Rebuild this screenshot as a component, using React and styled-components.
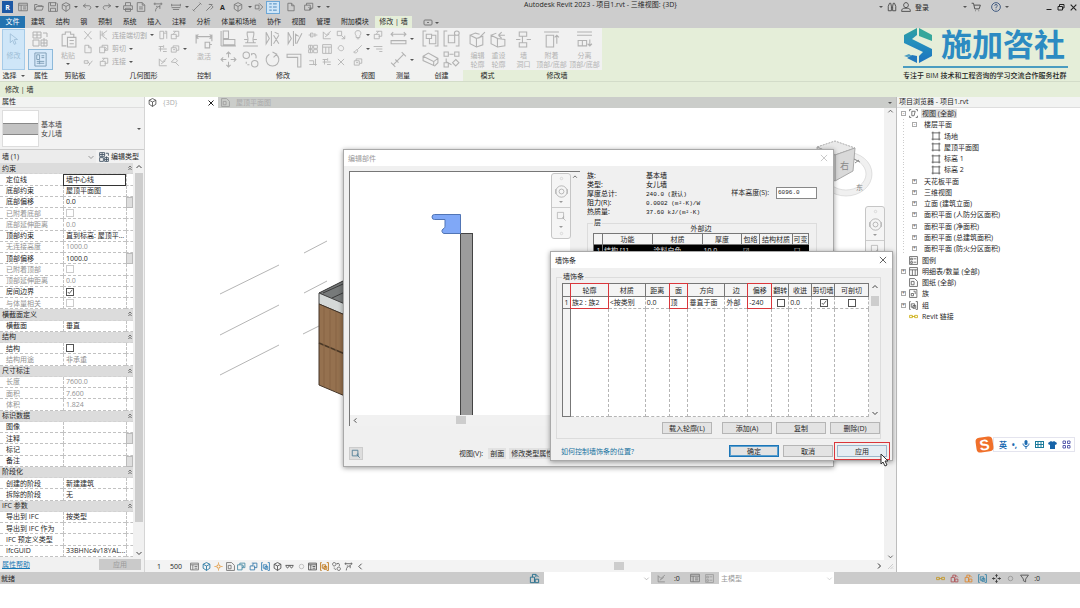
import React from "react";
import styled, { createGlobalStyle, css } from "styled-components";

const GlobalStyle = createGlobalStyle`
  * { box-sizing: border-box; }
  html, body { margin: 0; background: #fff; }
  body, button, input, select, table {
    font-family: "Open Sans", "Noto Sans CJK SC", sans-serif;
    font-size: 7px;
    line-height: 9px;
    color: #262626;
  }
  button, input, select { margin: 0; padding: 0; border: 0; background: none; border-radius: 0; }
  body { overflow-x: hidden; }
`;

/* ---------- icons ---------- */
const ICONS = {
  window: "M1 2h14v12H1zM1 5h14M5 5v9M8 8h5M8 11h5",
  open: "M1 13V4h4l2 2h6v2M1 13l3-6h11l-2 6z",
  save: "M1 1h12l2 2v12H1zM4 1v5h8V1M4 15v-5h8v5",
  cube: "M8 1l6 3v7l-6 4-6-4V4zM2 4l6 3 6-3M8 7v8",
  undo: "M6 3L2 6l4 3M2 6h9c4 0 4 6 0 6",
  redo: "M10 3l4 3-4 3M14 6H5c-4 0-4 6 0 6",
  print: "M4 6V1h8v5M1 6h14v6H1zM4 10h8v5H4z",
  doc: "M2 1h8l4 4v10H2zM10 1v4h4M5 8h6M5 11h6",
  measure: "M1 3h14M3 1v4M13 1v4M5 7h2M4 15c0-5 3-8 7-8M11 5v6",
  dim: "M1 9h14M1 5h14M1 3v4M15 3v4M3 12h10",
  line: "M2 14L14 2M1 12l3 3M12 1l3 3",
  tag: "M2 14L9 7M8 3l5 5-4 4M6 4h6",
  section: "M8 2l6 6-6 6M2 5h6v6H2z",
  list: "M2 3h4M8 3h6M2 8h4M8 8h6M2 13h4M8 13h6",
  switchWin: "M1 5h9v8H1zM4 5V2h10v8h-4M7 8l4 4M11 9v3H8",
  binoc: "M2 14V7l2-5h2l1 5v7zM9 14V7l1-5h2l2 5v7zM7 8h2",
  user: "M8 1c5 0 5 8 0 8s-5-8 0-8M1 15c0-5 3-5 7-5s7 0 7 5z",
  cart: "M1 2h3l2 9h7l2-6H5M7 14h1M12 14h1",
  help: "M8 1a7 7 0 100 14A7 7 0 008 1M6 6c0-3 4-3 4 0 0 2-2 1-2 4M8 12v1",
  arrow: "M4 1v11l3-3 2 5 2-1-2-5h4z",
  types: "M1 1h8v6H1zM1 9h6v6H1zM9 9h6v6H9zM5 1v6M12 7v8M1 4h8M9 12h6M11 2h4v4",
  props: "M2 1h12v14H2zM4 3h3v5H4zM9 4h3M9 6h3M4 10h8M4 12h8M7 9v4",
  paste: "M2 3h3V1h5v2h3v3M2 3v11h4M7 6h8v9H7zM9 9h4M9 12h4",
  cut: "M2 2l11 12M13 2L3 14M2 14h2M12 14h2",
  copy: "M3 2h6l4 4v8H3zM9 2v4h4",
  match: "M2 6h6v4H2zM8 8l3 3 4-5M9 14l2-3",
  cope: "M2 1v14M5 2v5l8-6M5 9l8 6M5 8h4M2 8h3",
  cutgeo: "M1 5h8v9H1zM5 5V2h9v8H9M9 5l3 2-3 4",
  join: "M5 2h9v8h-5M2 7h8v7H2zM5 7l4-5",
  wallA: "M3 2h6v12H3zM9 5h5v9M11 2h3v3",
  beam: "M1 4h7M1 8h13M4 4v8M8 12h6M9 2v4",
  split: "M2 14V3l5 5 7-6M2 14h12M5 11l7-5",
  hammer: "M2 8l6-6 4 4-3 3zM8 8l6 6",
  activate: "M1 3v8M15 3v6M1 5h14M3 3L1 5l2 2M13 3l2 2-2 2M9 10h4v5H9zM13 12h2",
  align: "M1 1v14M1 15h14M3 9h11v5H3zM3 1h5v7H3z",
  offset: "M1 15h14M3 12h10M5 12c2-5-1-6 0-10h6c1 4-2 5 0 10M2 9h3M11 9h3",
  mirror: "M7 1v14M2 2v11l3-5zM9 5l5 8M14 5l-5 8M10 2l4 2",
  mirrorLine: "M7 1v14M2 2v11l3-5zM9 13V4l3 2M10 13l5-10",
  move: "M8 1v5M8 10v5M1 8h5M10 8h5M6 3l2-2 2 2M6 13l2 2 2-2M3 6L1 8l2 2M13 6l2 2-2 2",
  copyObj: "M4 1c4 0 4 6 0 6s-4-6 0-6M12 9c4 0 4 6 0 6s-4-6 0-6M9 3c3-2 5 1 4 4M9 2v2M4 10v2M7 13h-2",
  rotate: "M11 3a6 6 0 11-6 0M8 1l4 2-3 3",
  trim: "M1 3h13v12h-3V6H1z",
  pins: "M1 8h5M10 8h5M4 5h4v6H4zM11 5v6",
  array: "M1 2h6v5H1zM9 2h6v5H9zM1 9h6v5H1zM9 9h6v5H9zM4 2v12",
  extend: "M2 12h12M2 6h7v6M12 3v11",
  x: "M3 3l10 10M13 3L3 13",
  scale: "M2 2h7v7H2zM9 9l5 5M14 9v5H9",
  unpin: "M4 5c2-4 7-3 8 1s-3 6-6 4-3-3-2-5",
  bulb: "M8 1c6 0 5 6 3 8v3H5V9C3 7 2 1 8 1M6 14h4",
  hide: "M2 6h8v7H2zM5 6V3h9v7h-4M5 9h3",
  brush: "M14 2L7 9M7 9c-3-1-2 4-6 4 3 3 8 0 6-4",
  lines: "M1 4h14M5 8h10M10 12h5",
  measureWall: "M1 4h14M3 2L1 4l2 2M13 2l2 2-2 2M1 10h14v3H1z",
  measureDiag: "M3 13L13 3M1 11l4 4M11 1l4 4M5 8l3 3",
  group: "M4 1H1v14h3M12 1h3v14h-3M4 4h5v4H4zM7 8v5h6V5H9",
  groupB: "M4 1H1v14h3M12 15h3V5M5 5h6v7H5zM13 1c3 0 3 4 0 4s-3-4 0-4",
  assembly: "M1 5l5-3 9 5v4l-3 3-11-5zM1 5l10 5v4M11 10l4-3",
  flow: "M1 1h4v4H1zM11 1h4v4h-4zM6 3h4M3 7v3l5 3M1 11h4v4H1zM12 8l3 3-3 3-3-3z",
  editProf: "M1 4l6 3v8l-6-3zM7 7l6-2v8l-6 2M1 4l5-2 4 1M9 7l6-6",
  resetProf: "M1 4l6 3v8l-6-3zM7 7l7 1v6l-7 1M1 4l5-2M8 4h6M8 4l3-3M8 4l3 3",
  opening: "M4 1h7v4H4zM4 11h7v4H4zM7 5v6M1 8h4M11 8h4",
  attach: "M1 1h14M3 4h7v11H3zM13 4v8M11 6l2-2 2 2",
  detach: "M1 1h14M1 4h14M2 9h8v5H2zM6 9v5M13 8v6M11 12l2 2 2-2",
  bbox: "M4 1H1v3M12 1h3v3M15 12v3h-3M4 15H1v-3M5 4h6l-2 8H5z",
  sheet: "M3 3h10v10H3zM1 3h2M3 1v2M13 1v2M13 3h2M1 13h2M3 13v2M13 13h2M13 13v2",
  legend: "M1 1h14v14H1zM3 4h3v3H3zM8 5h5M3 10h3v3H3zM8 11h5",
  schedule: "M1 1h14v14H1zM1 5h14M6 5v10M11 5v10",
  sheets: "M1 1h9l5 5v9H1zM4 6h5v6H4z",
  family: "M1 1h13v14H1zM4 8h4v4H4zM8 4h3v5",
  groups: "M3 1H1v14h2M12 1h3v14h-3M4 5h6v6H4zM7 8h5v5H7z",
  link: "M1 6h5v4H1zM10 6h5v4h-5zM5 8h6",
  wheel: "M8 1a7 7 0 100 14A7 7 0 008 1M8 5a3 3 0 100 6 3 3 0 000-6M1 5v6M15 5v6",
  zoomBox: "M2 2h9v9H2zM9 9l5 5M11 7v4",
  glasses: "M1 6h14M2 6c0 6 5 6 5 0M9 6c0 6 5 6 5 0",
  sun: "M8 5a3 3 0 100 6 3 3 0 000-6M8 1v2M8 13v2M1 8h2M13 8h2",
  filter: "M1 2h14L10 9v5l-4-2V9z",
  worker: "M2 6h6v8H2zM5 6V2h5v4M9 9h5v5H9zM10 2l4 4",
  dot: "M8 4a4 4 0 100 8 4 4 0 000-8",
  up: "M3 10l5-5 5 5",
  down: "M3 6l5 5 5-5",
  left: "M10 3L5 8l5 5",
  right: "M6 3l5 5-5 5",
  min: "M3 13h10",
  restore: "M2 7h9v7H2zM5 7V3h9v7h-3",
  grip: "M14 4L4 14M14 9l-5 5M14 13l-1 1",
  dbl: "M4 7l4-4 4 4M4 13l4-4 4 4",
};

function Icon({ name, size = 10, color = "#777", width = 1.4, fill = "none" }) {
  return (
    <svg width={size} height={size} viewBox="0 0 16 16" fill={fill} stroke={color} strokeWidth={width} aria-hidden="true">
      <path d={ICONS[name]} />
    </svg>
  );
}

const Caret = styled.i`
  flex: none;
  width: 0;
  height: 0;
  border: 2px solid transparent;
  border-top-color: ${(p) => p.$color || "#555"};
  border-bottom-width: 0;
`;

/* ---------- page ---------- */
const Page = styled.div`
  display: flex;
  flex-direction: column;
  min-height: 100vh;
  padding-bottom: 24px;
`;

const Header = styled.header`
  height: 28px;
  background: #cdcdcd;
`;

const TitleRow = styled.div`
  display: grid;
  grid-template-columns: 13fr auto 10fr;
  align-items: start;
  height: 16px;
`;

const QuickBar = styled.div`
  display: flex;
  align-items: center;
  height: 14px;
`;

const AppBadge = styled.button`
  width: 11px;
  height: 12px;
  margin: 0 2px;
  background: #1c58a5;
  color: #fff;
  font-weight: 700;
`;

const QuickButton = styled.button`
  display: inline-flex;
  flex: none;
  align-items: center;
  justify-content: center;
  width: ${(p) => p.$w}px;
  height: 13px;
  ${(p) => p.$on && css`background: #cfe6f8; outline: 1px solid #6da7d6; outline-offset: -1px;`}
`;

const WindowTitle = styled.h1`
  margin: 0;
  font-size: 7px;
  font-weight: 400;
  line-height: 10px;
  white-space: nowrap;
`;

const TitleTools = styled.div`
  display: flex;
  align-items: center;
  justify-content: flex-end;
  gap: 4px;
  height: 14px;
  padding-right: 2px;
`;

const Spacer = styled.span`
  flex: none;
  width: ${(p) => p.$w}px;
`;

const TabRow = styled.nav`
  display: flex;
  align-items: stretch;
  height: 12px;
`;

const FileTab = styled.button`
  width: 25px;
  background: #2273b0;
  color: #fff;
  line-height: 12px;
`;

const TabStrip = styled.div`
  display: flex;
  justify-content: space-between;
  width: 338px;
  margin: 0 6px;
`;

const Tab = styled.button`
  line-height: 12px;
  white-space: nowrap;
`;

const ActiveTab = styled(Tab)`
  width: 37px;
  background: #e5eed9;
`;

/* ---------- ribbon ---------- */
const Ribbon = styled.section`
  display: flex;
  height: 54px;
  background: #e5eed9;
  border-bottom: 1px solid #d3dcc9;
`;

const Panel = styled.div`
  display: flex;
  flex: none;
  flex-direction: column;
  width: ${(p) => p.$w}px;
  background: ${(p) => (p.$context ? "transparent" : "#f1f2f0")};
`;

const Tools = styled.div`
  display: flex;
  height: 42px;
  padding-left: ${(p) => p.$pad || 0}px;
  background: #f1f1f1;
`;

const PanelLabel = styled.div`
  display: flex;
  flex: 1;
  align-items: center;
  justify-content: center;
  gap: 4px;
`;

const Column = styled.div`
  display: grid;
  flex: none;
  grid-template-rows: ${(p) => (p.$rows === 2 ? "21px 21px" : "14px 13px 13px")};
  width: ${(p) => p.$w}px;
`;

const Tool = styled.button`
  display: flex;
  align-items: center;
  justify-content: ${(p) => (p.$start ? "flex-start" : "center")};
  gap: 3px;
  color: #ababab;
  white-space: nowrap;
  ${(p) => p.$on && css`margin: 1px 1px 1px 2px; background: #d8eafa; outline: 1px solid #8db9da;`}
`;

const TallTool = styled.button`
  display: flex;
  flex: none;
  flex-direction: column;
  align-items: center;
  width: ${(p) => p.$w}px;
  height: 41px;
  margin-top: 1px;
  padding-top: ${(p) => (p.$on ? 4 : 2)}px;
  gap: 3px;
  color: #b4b4b4;
  white-space: nowrap;
  ${(p) => p.$on && css`background: #cfe6f8; outline: 1px solid #a6cbe8; outline-offset: -1px; color: #9dbdd6; gap: 5px;`}
`;

const Brand = styled.div`
  display: grid;
  grid-template-columns: 30px 1fr;
  column-gap: 8px;
  align-content: start;
  align-items: start;
  width: 165px;
  margin-left: auto;
  margin-right: 12px;
`;

const BrandName = styled.strong`
  font-size: 31px;
  line-height: 32px;
  color: #2c8bc2;
  white-space: nowrap;
`;

const BrandTag = styled.div`
  grid-column: 1 / -1;
  margin-top: 2px;
  border-top: 2px solid #4a9cc0;
  padding-top: 3px;
  font-weight: 500;
  color: #222;
  white-space: nowrap;
`;

const OptionsBar = styled.div`
  height: 15px;
  padding-left: 5px;
  background: #e5eed9;
  line-height: 15px;
`;

/* ---------- workspace ---------- */
const Workspace = styled.main`
  position: relative;
  display: grid;
  flex: 1;
  grid-template-columns: 145px minmax(0, 1fr) 184px;
`;

const Side = styled.aside`
  display: flex;
  flex-direction: column;
  background: ${(p) => p.$bg};
  ${(p) => (p.$left ? css`border-right: 1px solid #d5d5d5;` : css`border-left: 1px solid #bdbdbd;`)}
`;

const SideTitle = styled.h2`
  margin: 0;
  padding-left: 2px;
  height: 11px;
  background: #f2f3f2;
  border-bottom: 1px solid #dedede;
  font-size: 7px;
  font-weight: 400;
  line-height: 10px;
`;

const TypePicker = styled.button`
  display: flex;
  align-items: center;
  height: 42px;
  padding: 0 3px 0 2px;
  background: #f2f2f2;
  border-bottom: 1px solid #ccc;
  text-align: left;
`;

const TypePreview = styled.span`
  width: 37px;
  height: 37px;
  margin-right: 2px;
  border: 1px solid #ddd;
  background: linear-gradient(#fff 12px, #888 12px, #888 13px, #c3c3c3 13px, #c3c3c3 23px, #888 23px, #888 24px, #fff 24px);
`;

const TypeName = styled.span`
  flex: 1;
  color: #444;
`;

const InstanceRow = styled.div`
  display: flex;
  height: 13px;
  background: #f2f2f2;
`;

const SelectBox = styled.label`
  position: relative;
  display: block;
  align-self: stretch;
  width: ${(p) => p.$w}px;
  background: ${(p) => p.$bg || "#fff"};
  select {
    display: block;
    appearance: none;
    width: 100%;
    height: 100%;
    padding-left: 2px;
    color: ${(p) => p.$color || "#262626"};
  }
  svg { position: absolute; right: 1px; top: 3px; pointer-events: none; }
`;

const EditType = styled.button`
  display: flex;
  flex: 1;
  align-items: center;
  gap: 2px;
  padding-left: 3px;
  white-space: nowrap;
`;

const PropBody = styled.div`
  display: flex;
  height: 394px;
`;

const PropTable = styled.table`
  flex: none;
  width: 133px;
  height: 394px;
  table-layout: fixed;
  border-collapse: separate;
  border-spacing: 0;
  background: #fff;
  td, th {
    padding: 0 0 0 6px;
    border-bottom: 1px dashed #c2c2c2;
    font-weight: 400;
    text-align: left;
    white-space: nowrap;
    overflow: hidden;
    line-height: 9px;
  }
  td { padding-left: 2px; border-left: 1px dashed #c2c2c2; }
`;

const GroupRow = styled.tr`
  && th { background: #dcdcdc; border-bottom-color: #d2d2d2; padding-left: 2px; }
  && th:last-child { padding: 0; text-align: center; }
  svg { display: block; margin: 0 auto; }
`;

const PropRow = styled.tr`
  color: ${(p) => (p.$muted ? "#929292" : "#262626")};
  && td:nth-child(2) { ${(p) => p.$focus && css`outline: 1px solid #333; outline-offset: -1px;`} }
  && td:last-child { padding: 0; ${(p) => p.$button && css`background: #dedede; border: 1px solid #bbb;`} }
`;

const Tick = styled.input.attrs({ type: "checkbox" })`
  appearance: none;
  display: block;
  width: 8px;
  height: 8px;
  margin: ${(p) => (p.$center ? "0 auto" : "0")};
  border: 1px solid ${(p) => (p.$muted ? "#ccc" : "#555")};
  background: #fff;
  &:checked {
    background: #fff url("data:image/svg+xml,%3Csvg xmlns='http://www.w3.org/2000/svg' viewBox='0 0 8 8'%3E%3Cpath d='M1 4l2 2 4-5' fill='none' stroke='%23333'/%3E%3C/svg%3E") center / 6px 6px no-repeat;
  }
`;

const VScroll = styled.div`
  display: flex;
  flex-direction: column;
  align-items: center;
  justify-content: space-between;
  width: ${(p) => p.$w || 10}px;
  background: #f1f1f1;
`;

const VThumb = styled.span`
  flex: ${(p) => (p.$h ? "none" : 1)};
  width: 8px;
  height: ${(p) => (p.$h ? p.$h + "px" : "auto")};
  margin: 2px 0 ${(p) => p.$after || 0}px;
  background: #cdcdcd;
`;

const PropFooter = styled.div`
  display: flex;
  flex: 1;
  align-items: center;
  justify-content: space-between;
  padding: 0 3px 0 2px;
  background: #f1f1f1;
  a { color: #1878b5; }
`;

const FlatButton = styled.button`
  width: 42px;
  height: 11px;
  background: #cacaca;
  color: #999;
`;

/* ---------- view area ---------- */
const ViewArea = styled.section`
  display: flex;
  flex-direction: column;
`;

const DocTabs = styled.div`
  display: flex;
  align-items: stretch;
  height: 11px;
  background: #cbcdca;
`;

const DocTab = styled.button`
  display: flex;
  align-items: center;
  gap: 6px;
  width: 73px;
  padding: 0 3px;
  background: ${(p) => (p.$on ? "#fff" : "transparent")};
  color: #aaa;
  span { flex: 1; text-align: left; }
`;

const Canvas = styled.div`
  position: relative;
  display: flex;
  flex: 1;
  justify-content: flex-end;
  background: #fff;
`;

const Scene = styled.svg`
  position: absolute;
  left: 0;
  top: 0;
`;

const CubeArt = styled.svg`
  position: absolute;
  right: 18px;
  top: 27px;
`;

const NavBar = styled.div`
  position: absolute;
  right: ${(p) => p.$right}px;
  top: ${(p) => p.$top}px;
  display: flex;
  flex-direction: column;
  align-items: center;
  justify-content: space-between;
  width: 20px;
  height: 66px;
  padding: 2px 0;
  border: 1px solid #c6c6c6;
  border-radius: 3px;
  background: #f5f5f5;
  hr { width: 100%; margin: 0; border: 0; border-top: 1px solid #ccc; }
`;

const ViewBar = styled.div`
  display: flex;
  align-items: center;
  height: 12px;
  padding: 0 2px 0 12px;
  background: #f3f3f3;
`;

const ViewIcons = styled.div`
  display: flex;
  justify-content: space-between;
  width: 175px;
  margin-left: 8px;
`;

const HTrack = styled.div`
  display: flex;
  flex: 1;
  align-items: center;
  justify-content: flex-end;
  gap: 3px;
`;

const HThumb = styled.span`
  width: 10px;
  height: 8px;
  background: #cdcdcd;
  margin-right: ${(p) => p.$after}px;
`;

/* ---------- dialogs ---------- */
const Dialog = styled.section`
  position: absolute;
  left: ${(p) => p.$x}px;
  top: ${(p) => p.$y}px;
  display: flex;
  flex-direction: column;
  width: ${(p) => p.$w}px;
  min-height: ${(p) => p.$h}px;
  border: 1px solid #a9a9a9;
  background: #f0f0f0;
  box-shadow: 0 1px 5px rgba(0, 0, 0, 0.4);
`;

const DialogTitle = styled.header`
  display: flex;
  align-items: center;
  justify-content: space-between;
  height: 16px;
  padding: 0 4px;
  background: #fff;
  color: ${(p) => (p.$muted ? "#999" : "#222")};
  button { display: flex; }
`;

const AssemblyBody = styled.div`
  display: flex;
  padding: 5px 17px 0 5px;
`;

const Preview = styled.div`
  position: relative;
  flex: none;
  width: 231px;
  height: 255px;
  border: solid #777;
  border-width: 1px 0 0 1px;
  background: #f1f1f1;
  > svg { display: block; }
`;

const PreviewScroll = styled.div`
  display: flex;
  align-items: center;
  height: 10px;
  padding-left: 2px;
  gap: 97px;
`;

const PreviewUp = styled.span`
  position: absolute;
  right: 2px;
  top: 2px;
  display: flex;
`;

const AssemblyInfo = styled.div`
  flex: 1;
  margin-left: 7px;
`;

const InfoTop = styled.div`
  display: flex;
  justify-content: space-between;
  height: 48px;
`;

const Facts = styled.dl`
  display: grid;
  grid-template-columns: 59px auto;
  grid-auto-rows: 9px;
  height: 45px;
  margin: 0;
  color: #111;
  white-space: nowrap;
  dd { margin: 0; }
`;

const Mono = styled.span`
  font-family: "Liberation Mono", "Noto Sans CJK SC", monospace;
  font-size: 6px;
`;

const Field = styled.label`
  display: flex;
  align-items: center;
  gap: 7px;
  height: 11px;
  margin-top: 16px;
  white-space: nowrap;
  input {
    width: 41px;
    height: 12px;
    padding-left: 1px;
    border: 1px solid #888;
    background: #fff;
    font-family: "Liberation Mono", monospace;
    font-size: 6px;
  }
`;

const Fieldset = styled.fieldset`
  min-width: 0;
  margin: ${(p) => p.$margin || 0};
  padding: ${(p) => p.$padding || 0};
  border: 1px solid #dcdcdc;
  legend { padding: 0 1px; line-height: 8px; }
`;

const Edge = styled.div`
  margin-top: -2px;
  text-align: center;
  line-height: 8px;
`;

const Grid = styled.table`
  width: 100%;
  table-layout: fixed;
  border-collapse: collapse;
  background: #fff;
  th, td { padding: 0; overflow: hidden; white-space: nowrap; }
  th { border: 1px solid #777; font-weight: 400; text-align: center; background: #f4f4f4; }
`;

const LayerGrid = styled(Grid)`
  thead th { height: 11px; }
  tbody td, tbody th { height: 12px; background: #000; color: #eee; padding-left: 1px; }
`;

const SweepGrid = styled(Grid)`
  flex: 1;
  width: auto;
  thead th { height: 13px; }
  td { border-right: 1px dashed #b5b5b5; border-bottom: 1px dashed #b5b5b5; padding-left: 1px; }
  tbody tr:first-child > * { height: 12px; }
  tbody tr:last-child > * { height: 108px; }
  && thead th.marked { border-left: 1px double #d9363b; border-right: 1px double #d9363b; border-top: 1px double #d9363b; }
  && tbody td.marked { border-left: 1px double #d9363b; border-right: 1px double #d9363b; border-bottom: 1px double #d9363b; }
  && thead th:has(+ .marked), && tbody td:has(+ .marked) { border-right: 1px double #d9363b; }
`;

const SweepArea = styled.div`
  display: flex;
`;

const ButtonRow = styled.div`
  display: flex;
  align-items: center;
  justify-content: flex-end;
  gap: 4px;
  margin-top: ${(p) => p.$top}px;
  padding-right: ${(p) => p.$right || 0}px;
  a { margin-right: auto; color: #16729f; text-decoration: none; }
`;

const DialogButton = styled.button`
  width: 50px;
  height: 12px;
  border: 1px solid ${(p) => (p.$primary ? "#1c76b8" : "#b5b5b5")};
  background: #e3e3e3;
  text-align: center;
  white-space: nowrap;
  ${(p) => p.$primary && css`box-shadow: inset 0 0 0 1px #5b9fce;`}
  ${(p) => p.$marked && css`border-color: #9cb8cc; background: #e5edf3; outline: 1px solid #d9363b; outline-offset: 2px;`}
  ${(p) => p.$gap && css`margin-right: 6px;`}
`;

const PreviewFooter = styled.div`
  display: flex;
  align-items: center;
  margin-top: auto;
  padding: 0 5px 6px;
`;

const IconButton = styled.button`
  display: flex;
  align-items: center;
  justify-content: center;
  width: 14px;
  height: 13px;
  margin-right: 96px;
  background: #ddd;
  border: 1px solid #ccc;
`;

const SoftButton = styled.button`
  height: 11px;
  margin-left: ${(p) => p.$left}px;
  padding: 0 2px;
  background: #e2e2e2;
  white-space: nowrap;
`;

const Pointer = styled.svg`
  position: absolute;
  left: 735px;
  top: 345px;
`;

/* ---------- browser ---------- */
const Tree = styled.ul`
  display: grid;
  grid-auto-rows: 1fr;
  height: 214px;
  margin: 0;
  padding: 0 0 0 2px;
  list-style: none;
`;

const TreeItem = styled.li`
  display: flex;
  align-items: center;
  gap: ${(p) => [3, 6, 2][p.$level]}px;
  padding-left: ${(p) => [2, 13, 32][p.$level]}px;
  white-space: nowrap;
  background: repeating-linear-gradient(#ccc 0 1px, transparent 1px 3px) ${(p) => (p.$level ? 4 : -9)}px 0 / 1px 100% no-repeat;
`;

const TreeLabel = styled.span`
  padding: 0 1px;
  background: ${(p) => (p.$on ? "#dedede" : "transparent")};
`;

const Expander = styled.button`
  display: flex;
  flex: none;
  align-items: center;
  justify-content: center;
  width: 5px;
  height: 5px;
  border: 1px solid #aaa;
  background: #fff;
  font-size: 5px;
  line-height: 3px;
  color: #555;
  visibility: ${(p) => (p.$hidden ? "hidden" : "visible")};
`;

const ImeBar = styled.div`
  position: absolute;
  right: 5px;
  top: 338px;
  display: flex;
  align-items: center;
  height: 19px;
`;

const ImeLogo = styled.span`
  z-index: 1;
  width: 17px;
  height: 15px;
  border-radius: 4px;
  background: #f0702a;
  color: #fff;
  font-family: "Liberation Sans", sans-serif;
  font-size: 15px;
  font-weight: 700;
  line-height: 15px;
  text-align: center;
  transform: rotate(-8deg);
`;

const ImeTools = styled.div`
  display: flex;
  align-items: center;
  justify-content: space-between;
  width: 82px;
  height: 15px;
  padding: 0 3px 0 5px;
  border: 1px solid #e4e4ee;
  background: #fff;
  color: #1c6ab0;
  font-size: 8px;
  font-weight: 700;
`;

/* ---------- status ---------- */
const StatusBar = styled.footer`
  display: flex;
  align-items: center;
  height: 12px;
  padding-left: 1px;
  background: #cbcbcb;
`;

const StatusText = styled.span`
  width: ${(p) => p.$w}px;
`;

const StatusTools = styled.div`
  display: flex;
  align-items: center;
  gap: 5px;
  margin-left: auto;
  margin-right: 40px;
`;

/* ---------- data ---------- */
const QUICK = [
  ["window", 16], ["open", 15], ["save", 14], ["cube", 12], ["caret", 8], ["undo", 13], ["caret", 8], ["redo", 12],
  ["caret", 8], ["print", 13], ["doc", 14], ["measure", 20], ["dim", 16], ["caret", 6], ["line", 14], ["tag", 12],
  ["A", 13], ["cube", 18], ["caret", 5], ["section", 14], ["list", 14, true], ["copy", 22], ["switchWin", 14],
  ["caret", 6], ["caret", 12],
];

const TABS = ["建筑", "结构", "钢", "预制", "系统", "插入", "注释", "分析", "体量和场地", "协作", "视图", "管理", "附加模块"];

const PROPS = [
  { g: "约束" },
  { k: "定位线", v: "墙中心线", focus: true },
  { k: "底部约束", v: "屋顶平面图" },
  { k: "底部偏移", v: "0.0", button: true },
  { k: "已附着底部", tick: true, muted: true },
  { k: "底部延伸距离", v: "0.0", muted: true },
  { k: "顶部约束", v: "直到标高: 屋顶平..." },
  { k: "无连接高度", v: "1000.0", muted: true },
  { k: "顶部偏移", v: "1000.0", button: true },
  { k: "已附着顶部", tick: true, muted: true },
  { k: "顶部延伸距离", v: "0.0", muted: true },
  { k: "房间边界", tick: true, on: true },
  { k: "与体量相关", tick: true, muted: true },
  { g: "横截面定义" },
  { k: "横截面", v: "垂直" },
  { g: "结构" },
  { k: "结构", tick: true },
  { k: "结构用途", v: "非承重", muted: true },
  { g: "尺寸标注" },
  { k: "长度", v: "7600.0", muted: true },
  { k: "面积", v: "7.600", muted: true },
  { k: "体积", v: "1.824", muted: true },
  { g: "标识数据" },
  { k: "图像" },
  { k: "注释", button: true },
  { k: "标记" },
  { k: "备注", button: true },
  { g: "阶段化" },
  { k: "创建的阶段", v: "新建建筑" },
  { k: "拆除的阶段", v: "无" },
  { g: "IFC 参数" },
  { k: "导出到 IFC", v: "按类型" },
  { k: "导出到 IFC 作为" },
  { k: "IFC 预定义类型" },
  { k: "IfcGUID", v: "33BHNc4v18YAL..." },
];

const TREE = [
  [0, "视图 (全部)", "-", "bbox", true],
  [1, "楼层平面", "-"],
  [2, "场地", "", "sheet"],
  [2, "屋顶平面图", "", "sheet"],
  [2, "标高 1", "", "sheet"],
  [2, "标高 2", "", "sheet"],
  [1, "天花板平面", "+"],
  [1, "三维视图", "+"],
  [1, "立面 (建筑立面)", "+"],
  [1, "面积平面 (人防分区面积)", "+"],
  [1, "面积平面 (净面积)", "+"],
  [1, "面积平面 (总建筑面积)", "+"],
  [1, "面积平面 (防火分区面积)", "+"],
  [0, "图例", "", "legend"],
  [0, "明细表/数量 (全部)", "+", "schedule"],
  [0, "图纸 (全部)", "", "sheets"],
  [0, "族", "+", "family"],
  [0, "组", "+", "groups"],
  [0, "Revit 链接", "", "link"],
];

const VIEW_ICONS = [
  ["window", "#777"], ["cube", "#2b7ba5"], ["sun", "#e08a1e"], ["sheets", "#777"], ["cutgeo", "#4f8fa8"],
  ["join", "#3f7fae"], ["groups", "#3f86b8"], ["cube", "#555"], ["glasses", "#555"], ["dot", "#bbb"],
  ["window", "#555"], ["groups", "#c07a20"], ["copyObj", "#666"], ["measure", "#666"], ["left", "#444"],
];

const SWEEP_COLS = [
  ["", 8], ["轮廓", 38], ["材质", 37], ["距离", 24], ["面", 19], ["方向", 37], ["边", 23], ["偏移", 24],
  ["翻转", 17], ["收进", 23], ["剪切墙", 23], ["可剖切", 34],
];
const SWEEP_ROW = ["1", "族2 : 族2", "<按类别", "0.0", "顶", "垂直于面", "外部", "-240", { on: false }, "0.0", { on: true }, { on: false }];
const MARKED = [1, 4, 7];

const LAYER_COLS = [["", 9], ["功能", 50], ["材质", 50], ["厚度", 39], ["包络", 18], ["结构材质", 33], ["可变", 16]];

/* ---------- sections ---------- */
const FADE = "#b2b2b2";

function IconColumn({ w, names, rows = 3, size }) {
  return (
    <Column $w={w} $rows={rows}>
      {names.map((n) => (
        <Tool key={n} aria-label={n}>
          <Icon name={n} size={size || (rows === 2 ? 17 : 10)} color={FADE} width={rows === 2 ? 1 : 1.4} />
        </Tool>
      ))}
    </Column>
  );
}

function LabelTool({ w, name, lines }) {
  return (
    <TallTool $w={w}>
      <Icon name={name} size={17} color={FADE} width={1} />
      <span>{lines.map((l) => <div key={l}>{l}</div>)}</span>
    </TallTool>
  );
}

function TopBar() {
  return (
    <Header>
      <TitleRow>
        <QuickBar>
          <AppBadge>R</AppBadge>
          {QUICK.map(([n, w, on], i) => (
            <QuickButton key={i} $w={w} $on={on} aria-label={n}>
              {n === "caret" ? <Caret /> : n === "A" ? <b>A</b> : <Icon name={n} size={10} color={on ? "#3b7db5" : "#777"} />}
            </QuickButton>
          ))}
        </QuickBar>
        <WindowTitle>Autodesk Revit 2023 - 项目1.rvt - 三维视图: {"{3D}"}</WindowTitle>
        <TitleTools>
          <Caret />
          <Icon name="binoc" size={10} color="#444" />
          <Icon name="user" size={10} color="#444" />
          <span>登录</span>
          <Spacer $w={26} />
          <Caret />
          <Icon name="cart" size={10} color="#444" />
          <Spacer $w={2} />
          <Icon name="help" size={10} color="#33507a" />
          <Caret />
          <Spacer $w={28} />
          <Icon name="min" size={8} color="#222" width={2} />
          <Icon name="restore" size={8} color="#222" width={2} />
          <Icon name="x" size={9} color="#222" width={2} />
        </TitleTools>
      </TitleRow>
      <TabRow>
        <FileTab>文件</FileTab>
        <TabStrip>{TABS.map((t) => <Tab key={t}>{t}</Tab>)}</TabStrip>
        <ActiveTab>修改 | 墙</ActiveTab>
        <QuickButton $w={38} aria-label="display">
          <svg width="10" height="7" viewBox="0 0 10 7" fill="none" stroke="#777"><rect x="1" y="1" width="8" height="5" rx="1" /><path d="M4 3.500h2" /></svg>
          <Spacer $w={2} />
          <Caret />
        </QuickButton>
      </TabRow>
    </Header>
  );
}

function RibbonBar() {
  const dark = (n) => <Icon name={n} size={10} color={FADE} />;
  return (
    <Ribbon>
      <Panel $w={27}>
        <Tools $pad={2}>
          <TallTool $w={23} $on><Icon name="arrow" size={13} color="#9dbdd6" width={1} /><span>修改</span></TallTool>
        </Tools>
        <PanelLabel>选择 <Caret /></PanelLabel>
      </Panel>
      <Panel $w={28}>
        <Tools>
          <Column $w={26} $rows={2}>
            <Tool aria-label="types"><Icon name="types" size={16} color={FADE} width={1} /></Tool>
            <Tool $on aria-label="props"><Icon name="props" size={15} color="#7d9db5" width={1} /></Tool>
          </Column>
        </Tools>
        <PanelLabel>属性</PanelLabel>
      </Panel>
      <Panel $w={40}>
        <Tools>
          <TallTool $w={26}><Icon name="paste" size={17} color={FADE} width={1} /><span>粘贴</span><Caret /></TallTool>
          <IconColumn w={14} names={["cut", "copy", "match"]} />
        </Tools>
        <PanelLabel>剪贴板</PanelLabel>
      </Panel>
      <Panel $w={97}>
        <Tools $pad={4}>
          <Column $w={57}>
            <Tool $start>{dark("cope")}连接端切割 <Caret /></Tool>
            <Tool $start>{dark("cutgeo")}剪切 <Caret /></Tool>
            <Tool $start>{dark("join")}连接 <Caret /></Tool>
          </Column>
          <IconColumn w={14} names={["wallA", "beam", "split"]} />
          <Column $w={20}>
            <Tool $start aria-label="paint">{dark("join")}</Tool>
            <Tool $start aria-label="split">{dark("hide")}<Caret /></Tool>
            <Tool $start aria-label="demolish">{dark("hammer")}</Tool>
          </Column>
        </Tools>
        <PanelLabel>几何图形</PanelLabel>
      </Panel>
      <Panel $w={24}>
        <Tools><TallTool $w={24}><Icon name="activate" size={18} color={FADE} width={1} /><span>激活</span></TallTool></Tools>
        <PanelLabel>控制</PanelLabel>
      </Panel>
      <Panel $w={134}>
        <Tools $pad={1}>
          <IconColumn w={22} rows={2} names={["align", "move"]} />
          <IconColumn w={22} rows={2} names={["offset", "copyObj"]} />
          <IconColumn w={22} rows={2} names={["mirror", "rotate"]} />
          <IconColumn w={23} rows={2} names={["mirrorLine", "trim"]} />
          <IconColumn w={14} names={["pins", "array", "extend"]} />
          <IconColumn w={14} names={["split", "schedule", "beam"]} />
          <IconColumn w={14} names={["scale", "unpin", "x"]} />
        </Tools>
        <PanelLabel>修改</PanelLabel>
      </Panel>
      <Panel $w={36}>
        <Tools $pad={3}>
          <Column $w={18}>
            <Tool $start aria-label="bulb">{dark("bulb")}<Caret /></Tool>
            <Tool $start aria-label="brush">{dark("brush")}<Caret /></Tool>
            <Tool $start aria-label="hide">{dark("hide")}</Tool>
          </Column>
          <IconColumn w={14} names={["join", "lines"]} />
        </Tools>
        <PanelLabel>视图</PanelLabel>
      </Panel>
      <Panel $w={34}>
        <Tools $pad={4}>
          <Column $w={26} $rows={2}>
            <Tool $start aria-label="measure"><Icon name="measureWall" size={17} color={FADE} width={1} /><Caret /></Tool>
            <Tool $start aria-label="dimension"><Icon name="measureDiag" size={17} color={FADE} width={1} /><Caret /></Tool>
          </Column>
        </Tools>
        <PanelLabel>测量</PanelLabel>
      </Panel>
      <Panel $w={43}>
        <Tools>
          <IconColumn w={21} rows={2} names={["group", "assembly"]} />
          <IconColumn w={21} rows={2} names={["groupB", "flow"]} />
        </Tools>
        <PanelLabel>创建</PanelLabel>
      </Panel>
      <Panel $w={49} $context>
        <Tools $pad={4}>
          <LabelTool w={21} name="editProf" lines={["编辑", "轮廓"]} />
          <LabelTool w={21} name="resetProf" lines={["重设", "轮廓"]} />
        </Tools>
        <PanelLabel>模式</PanelLabel>
      </Panel>
      <Panel $w={90} $context>
        <Tools>
          <LabelTool w={23} name="opening" lines={["墙", "洞口"]} />
          <LabelTool w={33} name="attach" lines={["附着", "顶部/底部"]} />
          <LabelTool w={33} name="detach" lines={["分离", "顶部/底部"]} />
        </Tools>
        <PanelLabel>修改墙</PanelLabel>
      </Panel>
      <Brand>
        <svg width="30" height="36" viewBox="0 0 30 36" aria-hidden="true">
          <defs>
            <linearGradient id="brandFill" x1="0" y1="0" x2="0" y2="1">
              <stop offset="0" stopColor="#2e9f9c" />
              <stop offset="0.400" stopColor="#2590bd" />
              <stop offset="1" stopColor="#1d72c0" />
            </linearGradient>
          </defs>
          <path d="M14 0v7l-5 4 20 10v7l-13 7v-7l4-4L1 15V7z" fill="url(#brandFill)" />
          <path d="M16 0l13 7v6l-13-5z" fill="#36a79c" />
          <path d="M14 35v-7l-5-1-5 3z" fill="#2379bd" />
          <path d="M1 28l5-2 3 2-5 1z" fill="#4a9cc0" />
        </svg>
        <BrandName>施加咨社</BrandName>
        <BrandTag>专注于 BIM 技术和工程咨询的学习交流合作服务社群</BrandTag>
      </Brand>
    </Ribbon>
  );
}

function Properties() {
  return (
    <Side $left $bg="#f2f2f2">
      <SideTitle>属性</SideTitle>
      <TypePicker>
        <TypePreview />
        <TypeName>基本墙<br />女儿墙</TypeName>
        <Caret />
      </TypePicker>
      <InstanceRow>
        <SelectBox $w={96} $bg="#ececec">
          <select aria-label="实例"><option>墙 (1)</option></select>
          <Icon name="down" size={8} />
        </SelectBox>
        <EditType><Icon name="types" size={10} color="#456" />编辑类型</EditType>
      </InstanceRow>
      <PropBody>
        <PropTable>
          <colgroup><col width="63" /><col width="63" /><col width="7" /></colgroup>
          <tbody>
            {PROPS.map((p, i) =>
              p.g ? (
                <GroupRow key={i}><th colSpan={2}>{p.g}</th><th><Icon name="dbl" size={6} color="#333" width={2} /></th></GroupRow>
              ) : (
                <PropRow key={i} $muted={p.muted} $focus={p.focus} $button={p.button}>
                  <th scope="row">{p.k}</th>
                  <td>{p.tick ? <Tick $muted={p.muted} defaultChecked={p.on} aria-label={p.k} /> : p.v}</td>
                  <td />
                </PropRow>
              )
            )}
          </tbody>
        </PropTable>
        <VScroll $w={11}>
          <Icon name="up" size={8} color="#444" width={2} />
          <VThumb $after={27} />
          <Icon name="down" size={8} color="#444" width={2} />
        </VScroll>
      </PropBody>
      <PropFooter><a href="#help">属性帮助</a><FlatButton>应用</FlatButton></PropFooter>
    </Side>
  );
}

function NavTools({ right, top }) {
  return (
    <NavBar $right={right} $top={top}>
      <Icon name="dot" size={5} color="#bbb" />
      <Icon name="wheel" size={13} color="#aaa" width={1} />
      <Caret $color="#999" />
      <hr />
      <Icon name="zoomBox" size={11} color="#aaa" width={1} />
      <Caret $color="#999" />
      <Icon name="dot" size={5} color="#bbb" />
    </NavBar>
  );
}

function AssemblyDialog() {
  return (
    <Dialog $x={198} $y={41} $w={491} $h={318} aria-label="编辑部件">
      <DialogTitle $muted>编辑部件<button aria-label="关闭"><Icon name="x" size={10} color="#aaa" width={1} /></button></DialogTitle>
      <AssemblyBody>
        <Preview>
          <svg width="220" height="243" viewBox="350 171 220 243" aria-hidden="true">
            <rect x="350" y="171" width="220" height="243" fill="#fff" />
            <rect x="460.500" y="232.500" width="12" height="190" fill="#9c9c9c" stroke="#444" />
            <path d="M434.500 213.500H460.500V232.500H444a2.500 2.500 0 01-1-4.500c2-1 2-2 2-4v-5.500H434.500a2.500 2.500 0 010-5z" fill="#80a8f7" stroke="#5175b5" />
          </svg>
          <NavTools right={9} top={1} />
          <PreviewUp><Icon name="up" size={6} color="#444" width={2} /></PreviewUp>
          <PreviewScroll><Icon name="left" size={7} color="#333" width={2} /><HThumb $after={0} /></PreviewScroll>
        </Preview>
        <AssemblyInfo>
          <InfoTop>
            <Facts>
              <dt>族:</dt><dd>基本墙</dd>
              <dt>类型:</dt><dd>女儿墙</dd>
              <dt>厚度总计:</dt><dd><Mono>240.0 (默认)</Mono></dd>
              <dt>阻力(R):</dt><dd><Mono>0.0002 (m²·K)/W</Mono></dd>
              <dt>热质量:</dt><dd><Mono>37.60 kJ/(m²·K)</Mono></dd>
            </Facts>
            <Field>样本高度(S):<input defaultValue="6096.0" /></Field>
          </InfoTop>
          <Fieldset $padding="0 7px 0 5px">
            <legend>层</legend>
            <Edge>外部边</Edge>
            <LayerGrid>
              <colgroup>{LAYER_COLS.map(([n, w]) => <col key={n} width={w} />)}</colgroup>
              <thead><tr>{LAYER_COLS.map(([n]) => <th key={n}>{n}</th>)}</tr></thead>
              <tbody><tr><th>1</th><td>结构 [1]</td><td>涂料白色</td><td>10.0</td><td>☑</td><td /><td>☐</td></tr></tbody>
            </LayerGrid>
          </Fieldset>
        </AssemblyInfo>
      </AssemblyBody>
      <PreviewFooter>
        <IconButton aria-label="预览"><Icon name="zoomBox" size={10} color="#4f7d95" /></IconButton>
        <span>视图(V):</span>
        <SoftButton $left={5}>剖面</SoftButton>
        <SoftButton $left={3}>修改类型属性</SoftButton>
      </PreviewFooter>
    </Dialog>
  );
}

function SweepDialog() {
  const mark = (i) => (MARKED.includes(i) ? "marked" : undefined);
  return (
    <Dialog $x={405} $y={143} $w={343} $h={210} aria-label="墙饰条">
      <DialogTitle>墙饰条<button aria-label="关闭"><Icon name="x" size={10} color="#333" width={1.2} /></button></DialogTitle>
      <Fieldset $margin="5px 11px 0 5px" $padding="2px 0 4px 5px">
        <legend>墙饰条</legend>
        <SweepArea>
          <SweepGrid>
            <colgroup>{SWEEP_COLS.map(([n, w]) => <col key={n} width={w} />)}</colgroup>
            <thead><tr>{SWEEP_COLS.map(([n], i) => <th key={n} className={mark(i)}>{n}</th>)}</tr></thead>
            <tbody>
              <tr>
                {SWEEP_ROW.map((c, i) =>
                  i === 0 ? <th key={i} scope="row">{c}</th> : (
                    <td key={i} className={mark(i)}>
                      {typeof c === "string" ? c : <Tick $center defaultChecked={c.on} aria-label={SWEEP_COLS[i][0]} />}
                    </td>
                  )
                )}
              </tr>
              <tr>{SWEEP_ROW.map((c, i) => (i === 0 ? <th key={i} /> : <td key={i} />))}</tr>
            </tbody>
          </SweepGrid>
          <VScroll $w={11}>
            <Icon name="up" size={8} color="#444" width={2} />
            <VThumb $h={10} $after={100} />
            <Icon name="down" size={8} color="#444" width={2} />
          </VScroll>
        </SweepArea>
        <ButtonRow $top={5}>
          <DialogButton $gap>载入轮廓(L)</DialogButton>
          <DialogButton>添加(A)</DialogButton>
          <DialogButton>复制</DialogButton>
          <DialogButton>删除(D)</DialogButton>
        </ButtonRow>
      </Fieldset>
      <ButtonRow $top={6} $right={5}>
        <Spacer $w={6} />
        <a href="#help">如何控制墙饰条的位置?</a>
        <DialogButton $primary>确定</DialogButton>
        <DialogButton>取消</DialogButton>
        <DialogButton $marked>应用</DialogButton>
      </ButtonRow>
    </Dialog>
  );
}

function Viewport() {
  return (
    <ViewArea>
      <DocTabs>
        <DocTab $on><Icon name="cube" size={9} color="#444" /><span>{"{3D}"}</span><Icon name="x" size={8} color="#222" width={2} /></DocTab>
        <DocTab><Icon name="sheets" size={9} color="#999" /><span>屋顶平面图</span></DocTab>
        <HTrack><Caret /><Spacer $w={1} /></HTrack>
      </DocTabs>
      <Canvas>
        <Scene width="240" height="320" viewBox="145 108 240 320" aria-hidden="true">
          <path d="M220 294l59-29M304 253l23-12M304 293l23-12M220 335l59-30M303 334l16-8M220 375l59-30" stroke="#b5b5b5" fill="none" />
          <path d="M319 293l26-13v25z" fill="#777a7a" stroke="#333" />
          <path d="M323 293l20-9M332 298l13-6" stroke="#3c3c3c" />
          <path d="M319 293l26 11v11l-26-11z" fill="#d5d9d8" stroke="#444" />
          <path d="M319 304l26 11v81l-26-11z" fill="#95714f" stroke="#443528" />
          <path d="M319 343l26 11" stroke="#4a3826" strokeWidth="1.500" />
          <path d="M324 307v79M330 310v79M336 312v80" stroke="#876545" />
        </Scene>
        <CubeArt width="66" height="66" viewBox="812 135 66 66" aria-hidden="true">
          <ellipse cx="846" cy="174" rx="23" ry="19" fill="none" stroke="#f0f0f0" strokeWidth="6" />
          <ellipse cx="846" cy="174" rx="26" ry="22" fill="none" stroke="#cfcfcf" strokeWidth="0.600" />
          <ellipse cx="846" cy="174" rx="20" ry="16" fill="none" stroke="#cfcfcf" strokeWidth="0.600" />
          <path d="M817 147l18-6 20 7-20 7z" fill="#e9e9e9" stroke="#aaa" strokeDasharray="2 1" />
          <path d="M835 155l20-7-2 23-18 10z" fill="#d9d9d9" stroke="#aaa" />
          <path d="M817 147l18 8v26l-16-9z" fill="#e3e3e3" stroke="#aaa" />
          <text x="840" y="169" fontSize="9" fill="#888">右</text>
          <text x="856" y="190" fontSize="7" fill="#888">东</text>
          <path d="M854 159l6 3M855 163l4-3" stroke="#888" />
        </CubeArt>
        <NavTools right={11} top={98} />
        <VScroll $w={12}>
          <Icon name="up" size={7} color="#555" width={2} />
          <Icon name="down" size={7} color="#555" width={2} />
        </VScroll>
        <AssemblyDialog />
        <SweepDialog />
        <Pointer width="9" height="14" viewBox="0 0 9 14" aria-hidden="true">
          <path d="M1 1v10l2-2 2 4 2-1-2-4h3z" fill="#fff" stroke="#333" />
        </Pointer>
      </Canvas>
      <ViewBar>
        <span>1</span><Spacer $w={9} /><span>500</span>
        <ViewIcons>{VIEW_ICONS.map(([n, c], i) => <Icon key={i} name={n} size={9} color={c} width={1.6} />)}</ViewIcons>
        <HTrack><HThumb $after={248} /><Icon name="right" size={8} color="#333" width={2} /><Icon name="grip" size={8} color="#bbb" /></HTrack>
      </ViewBar>
    </ViewArea>
  );
}

function Browser() {
  return (
    <Side $bg="#fff">
      <SideTitle>项目浏览器 - 项目1.rvt</SideTitle>
      <Tree>
        {TREE.map(([level, text, exp, icon, on]) => (
          <TreeItem key={text} $level={level}>
            {level < 2 && <Expander $hidden={!exp} aria-label={text}>{exp}</Expander>}
            {icon && <Icon name={icon} size={level === 2 ? 10 : 9} color={icon === "link" ? "#c9a900" : "#555"} width={1.4} />}
            <TreeLabel $on={on}>{text}</TreeLabel>
          </TreeItem>
        ))}
      </Tree>
    </Side>
  );
}

function Ime() {
  return (
    <ImeBar>
      <ImeLogo>S</ImeLogo>
      <ImeTools>
        <span>英</span>
        <span>•,</span>
        <svg width="8" height="9" viewBox="0 0 8 9"><rect x="2.500" y="0" width="3" height="5" rx="1.500" fill="#1c6ab0" /><path d="M1 3.500c0 4 6 4 6 0M4 6v3" stroke="#1c6ab0" fill="none" /></svg>
        <svg width="9" height="8" viewBox="0 0 9 8" fill="none" stroke="#1a7a9a"><rect x="0.500" y="0.500" width="8" height="6" /><path d="M1 3.500h7M3 1v5M6 1v5" /></svg>
        <svg width="9" height="8" viewBox="0 0 9 8" fill="#1763a8"><path d="M3 0c1 1 2 1 3 0l3 2-1 2-1-.5V8H2V3.500L1 4 0 2z" /></svg>
        <svg width="9" height="9" viewBox="0 0 9 9" fill="none" stroke="#5a5fae"><path d="M1 1h2.500v2.500H1zM5.500 1H8v2.500H5.500zM1 5.500h2.500V8H1zM5.500 5.500H8V8H5.500z" /></svg>
      </ImeTools>
    </ImeBar>
  );
}

function Status() {
  const right = [["link", "#c49a2c"], ["worker", "#b0565a"], ["worker", "#dd8a35"], ["groups", "#3c86a8"], ["move", "#333"], ["dot", "#999"], ["filter", "#555"]];
  return (
    <StatusBar>
      <StatusText $w={528}>就绪</StatusText>
      <Icon name="worker" size={11} color="#2c7390" />
      <Spacer $w={4} />
      <SelectBox $w={107}><select aria-label="工作集"><option></option></select><Icon name="down" size={7} color="#999" /></SelectBox>
      <Spacer $w={6} />
      <Icon name="split" size={9} color="#888" />
      <Spacer $w={8} />
      <StatusText $w={16}>:0</StatusText>
      <Icon name="window" size={10} color="#777" />
      <Spacer $w={5} />
      <Icon name="legend" size={9} color="#999" />
      <Spacer $w={5} />
      <SelectBox $w={115} $color="#999"><select aria-label="设计选项"><option>主模型</option></select><Icon name="down" size={7} color="#bbb" /></SelectBox>
      <StatusTools>
        {right.map(([n, c], i) => <Icon key={i} name={n} size={9} color={c} width={1.6} />)}
        <span>:0</span>
      </StatusTools>
    </StatusBar>
  );
}

export default function App() {
  return (
    <Page>
      <GlobalStyle />
      <TopBar />
      <RibbonBar />
      <OptionsBar>修改 | 墙</OptionsBar>
      <Workspace>
        <Properties />
        <Viewport />
        <Browser />
        <Ime />
      </Workspace>
      <Status />
    </Page>
  );
}
